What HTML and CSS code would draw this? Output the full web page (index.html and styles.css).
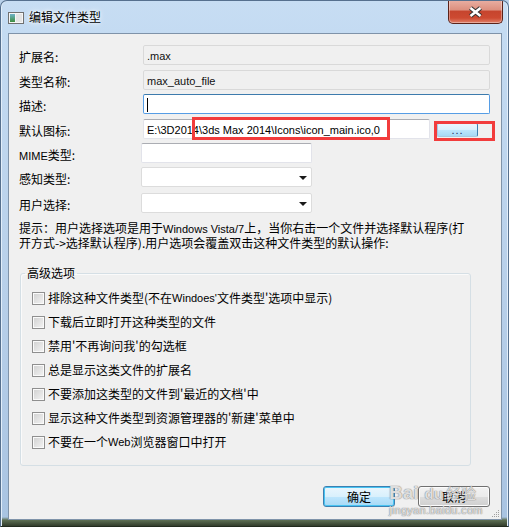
FILE: index.html
```html
<!DOCTYPE html>
<html lang="zh-CN">
<head>
<meta charset="utf-8">
<title>编辑文件类型</title>
<link rel="stylesheet" href="styles.css">
</head>
<body>
<div class="window">
  <div class="titlebar">
    <svg class="app-icon" width="16" height="12" viewBox="0 0 16 12">
      <defs>
        <linearGradient id="ig" x1="0" y1="0" x2="0" y2="1">
          <stop offset="0" stop-color="#6fb3c9"/>
          <stop offset="1" stop-color="#3e8e3e"/>
        </linearGradient>
      </defs>
      <rect x="0.5" y="0.5" width="15" height="11" fill="#f6f6f6" stroke="#707070"/>
      <rect x="2" y="2" width="5" height="8" fill="url(#ig)"/>
      <rect x="8" y="2" width="6" height="8" fill="#e4e4e4"/>
    </svg>
    <span class="title">编辑文件类型</span>
    <div class="close">
      <svg width="17" height="12" viewBox="0 0 17 12">
        <path d="M3.5 2 L13.5 10 M13.5 2 L3.5 10" stroke="#2f2f2f" stroke-width="4.6" fill="none"/>
        <path d="M3.5 2 L13.5 10 M13.5 2 L3.5 10" stroke="#ffffff" stroke-width="2.6" fill="none"/>
      </svg>
    </div>
  </div>

  <div class="client">
    <div class="form">
      <div class="lbl">扩展名:</div>
      <div class="field disabled"><span class="en">.max</span></div>

      <div class="lbl">类型名称:</div>
      <div class="field disabled"><span class="en">max_auto_file</span></div>

      <div class="lbl">描述:</div>
      <div class="field focused"><span class="caret"></span></div>

      <div class="lbl">默认图标:</div>
      <div class="icon-row">
        <div class="field icon-field"><span class="en">E:\3D2014\3ds Max 2014\Icons\icon_main.ico,0</span><span class="mark mark-text"></span></div>
        <div class="browse-wrap">
          <button class="browse">...</button>
          <span class="mark mark-btn"></span>
        </div>
      </div>

      <div class="lbl"><span class="en">MIME</span>类型:</div>
      <div class="field short"></div>

      <div class="lbl">感知类型:</div>
      <div class="field short combo"><span class="arrow"></span></div>

      <div class="lbl">用户选择:</div>
      <div class="field short combo"><span class="arrow"></span></div>
    </div>

    <p class="hint">提示：用户选择选项是用于<span class="en">Windows Vista/7</span>上，当你右击一个文件并选择默认程序(打<br>开方式-&gt;选择默认程序).用户选项会覆盖双击这种文件类型的默认操作:</p>

    <fieldset class="group">
      <legend>高级选项</legend>
      <div class="check"><span class="box"></span>排除这种文件类型(不在<span class="en">Windoes'</span>文件类型'选项中显示)</div>
      <div class="check"><span class="box"></span>下载后立即打开这种类型的文件</div>
      <div class="check"><span class="box"></span>禁用'不再询问我'的勾选框</div>
      <div class="check"><span class="box"></span>总是显示这类文件的扩展名</div>
      <div class="check"><span class="box"></span>不要添加这类型的文件到'最近的文档'中</div>
      <div class="check"><span class="box"></span>显示这种文件类型到资源管理器的'新建'菜单中</div>
      <div class="check"><span class="box"></span>不要在一个<span class="en">Web</span>浏览器窗口中打开</div>
    </fieldset>

    <div class="buttons">
      <button class="btn default">确定</button>
      <button class="btn">取消</button>
    </div>

    <div class="grip">
      <svg width="9" height="9" viewBox="0 0 9 9">
        <g fill="#a0a0a0">
          <rect x="7" y="1" width="1" height="1"/>
          <rect x="5" y="3" width="1" height="1"/><rect x="7" y="3" width="1" height="1"/>
          <rect x="3" y="5" width="1" height="1"/><rect x="5" y="5" width="1" height="1"/><rect x="7" y="5" width="1" height="1"/>
          <rect x="1" y="7" width="1" height="1"/><rect x="3" y="7" width="1" height="1"/><rect x="5" y="7" width="1" height="1"/><rect x="7" y="7" width="1" height="1"/>
        </g>
      </svg>
    </div>
  </div>

  <div class="watermark">
    <div class="wm-line"><span class="wm-big">Bai</span><span class="wm-du">du</span><span class="wm-cn">经验</span></div>
    <div class="wm-url">jingyan.baidu.com</div>
  </div>
</div>
</body>
</html>
```

FILE: styles.css
```css
* { box-sizing: border-box; }

html, body {
  margin: 0;
  padding: 0;
  background: #b9d1ea;
}

body {
  font-family: "Noto Sans CJK SC", "Liberation Sans", sans-serif;
  font-size: 12px;
  line-height: 14px;
  color: #000;
}

.en {
  font-family: "Liberation Sans", "Noto Sans CJK SC", sans-serif;
  font-size: 11px;
}

.window {
  position: relative;
  width: 509px;
  height: 527px;
  display: flex;
  flex-direction: column;
  border: 1px solid #56708e;
  border-bottom-color: #222b1e;
  border-radius: 7px 7px 0 0;
  background: linear-gradient(to bottom,
    #c7ddf3 0px, #c4dbf2 32px, #b7cfe9 300px, #a9c4e2 516px,
    #5e7054 519px, #2b3425 526px);
  box-shadow: inset 1px 0 0 #e2eefa, inset -1px 0 0 #e2eefa;
  overflow: hidden;
}

/* Title bar */
.titlebar {
  height: 32px;
  flex: none;
  display: flex;
  align-items: center;
  padding-left: 7px;
}

.app-icon {
  flex: none;
  margin-top: 1px;
}

.title {
  margin-left: 5px;
  font-size: 12px;
  color: #000;
  text-shadow: 0 0 6px #fff, 0 0 3px #fff;
}

.close {
  align-self: flex-start;
  margin-left: auto;
  margin-right: 5px;
  margin-top: -1px;
  width: 55px;
  height: 24px;
  display: flex;
  align-items: center;
  justify-content: center;
  border: 1px solid #5b2219;
  border-top: none;
  border-radius: 0 0 5px 5px;
  background: linear-gradient(to bottom,
    #eab0a4 0%, #dd907f 42%, #c6452e 50%, #cd4a31 78%, #e0806a 100%);
  box-shadow: inset 0 0 0 1px rgba(255, 255, 255, 0.35);
}

/* Client area */
.client {
  position: relative;
  flex: 1;
  margin: 0 6px 6px 7px;
  border: 1px solid #7f93a9;
  background: #f0f0f0;
  padding: 11px 11px 0 10px;
}

.form {
  display: grid;
  grid-template-columns: 124px 1fr;
  grid-template-rows: 25px 24px 25px 24px 24px 26px 20px;
  align-items: start;
}

.lbl {
  height: 20px;
  line-height: 20px;
  padding-top: 2px;
  white-space: nowrap;
}

.field {
  position: relative;
  height: 20px;
  line-height: 18px;
  padding: 0 3px;
  white-space: nowrap;
  background: #fff;
  border: 1px solid #e2e3ea;
  border-top-color: #abadb3;
  border-radius: 2px;
}

.field.disabled {
  background: #f0f0f0;
  border-color: #d9d9d9;
  color: #111;
}

.field.focused {
  border-color: #569de5;
  border-top-color: #3d7bad;
}

.caret {
  display: inline-block;
  width: 1px;
  height: 14px;
  background: #000;
  vertical-align: middle;
  margin-top: -2px;
}

.icon-row {
  display: flex;
  align-items: flex-start;
}

.icon-field {
  width: 287px;
  flex: none;
}

.browse-wrap {
  position: relative;
  margin-left: 7px;
  margin-top: 4px;
  width: 41px;
  height: 14px;
}

.browse {
  display: block;
  width: 41px;
  height: 14px;
  padding: 0;
  font-family: "Liberation Sans", sans-serif;
  font-size: 11px;
  line-height: 10px;
  color: #1c2a5a;
  letter-spacing: 1px;
  border: 1px solid #a9c8df;
  border-right-color: #3c7fb1;
  border-radius: 2px;
  background: linear-gradient(to bottom, #eaf6fd 0%, #d9f0fc 50%, #bee6fd 51%, #a7d9f5 100%);
}

.mark {
  position: absolute;
  border: 3px solid #f23c3c;
  pointer-events: none;
}

.mark-text {
  left: 48px;
  top: -3px;
  width: 198px;
  height: 23px;
}

.mark-btn {
  left: -3px;
  top: -2px;
  width: 61px;
  height: 20px;
}

.field.short {
  width: 171px;
  margin-left: -2px;
}

.combo {
  display: flex;
  align-items: center;
  justify-content: flex-end;
  padding-right: 4px;
  border-color: #dcdcdc;
}

.arrow {
  width: 0;
  height: 0;
  border-left: 4px solid transparent;
  border-right: 4px solid transparent;
  border-top: 4px solid #1a1a1a;
  margin-top: 1px;
}

.hint {
  margin: 8px 0 0 0;
  line-height: 14px;
  white-space: nowrap;
}

/* Group box */
.group {
  margin: 16px 0 0 1px;
  width: 451px;
  min-width: 0;
  padding: 6px 0 11px 11px;
  border: 1px solid #d5dfe5;
  border-radius: 3px;
  box-shadow: inset 1px 1px 0 #fafafa;
}

.group legend {
  margin-left: -7px;
  padding: 0 2px;
  line-height: 14px;
}

.check {
  height: 24px;
  display: flex;
  align-items: center;
  white-space: nowrap;
}

.box {
  flex: none;
  width: 13px;
  height: 13px;
  margin-right: 3px;
  border: 1px solid #8f8f8f;
  background: linear-gradient(135deg, #d0d0d0 0%, #f4f4f4 100%);
  box-shadow: inset 0 0 0 1px #fafafa;
}

/* Dialog buttons */
.buttons {
  margin-top: 20px;
  display: flex;
  justify-content: flex-end;
  gap: 23px;
}

.btn {
  width: 72px;
  height: 21px;
  padding: 0;
  font: inherit;
  font-size: 12px;
  line-height: 17px;
  color: #000;
  border: 1px solid #707070;
  border-radius: 3px;
  background: linear-gradient(to bottom, #f2f2f2 0%, #ebebeb 50%, #dddddd 51%, #cfcfcf 100%);
  box-shadow: inset 0 0 0 1px #fcfcfc;
}

.btn.default {
  border-color: #3c7fb1;
  background: linear-gradient(to bottom, #eaf6fd 0%, #d9f0fc 50%, #bee6fd 51%, #a7d9f5 100%);
  box-shadow: inset 0 0 0 1px #48c4f2;
}

.grip {
  position: absolute;
  right: 1px;
  bottom: 1px;
  width: 9px;
  height: 9px;
  line-height: 0;
}

/* Watermark overlay */
.watermark {
  position: absolute;
  left: 388px;
  top: 482px;
  color: rgba(255, 255, 255, 0.75);
  text-shadow: 0 0 1px rgba(120, 120, 120, 0.9), 0 0 1px rgba(120, 120, 120, 0.9);
  pointer-events: none;
}

.wm-line {
  display: flex;
  align-items: baseline;
  font-family: "Liberation Sans", sans-serif;
  font-weight: bold;
  line-height: 20px;
}

.wm-big {
  font-size: 19px;
}

.wm-du {
  font-size: 15px;
  margin-left: 6px;
}

.wm-cn {
  font-family: "Noto Sans CJK SC", sans-serif;
  font-size: 15px;
  font-weight: normal;
  margin-left: 3px;
}

.wm-url {
  font-family: "Liberation Sans", sans-serif;
  font-size: 11px;
  line-height: 12px;
  letter-spacing: 0.3px;
}
```
